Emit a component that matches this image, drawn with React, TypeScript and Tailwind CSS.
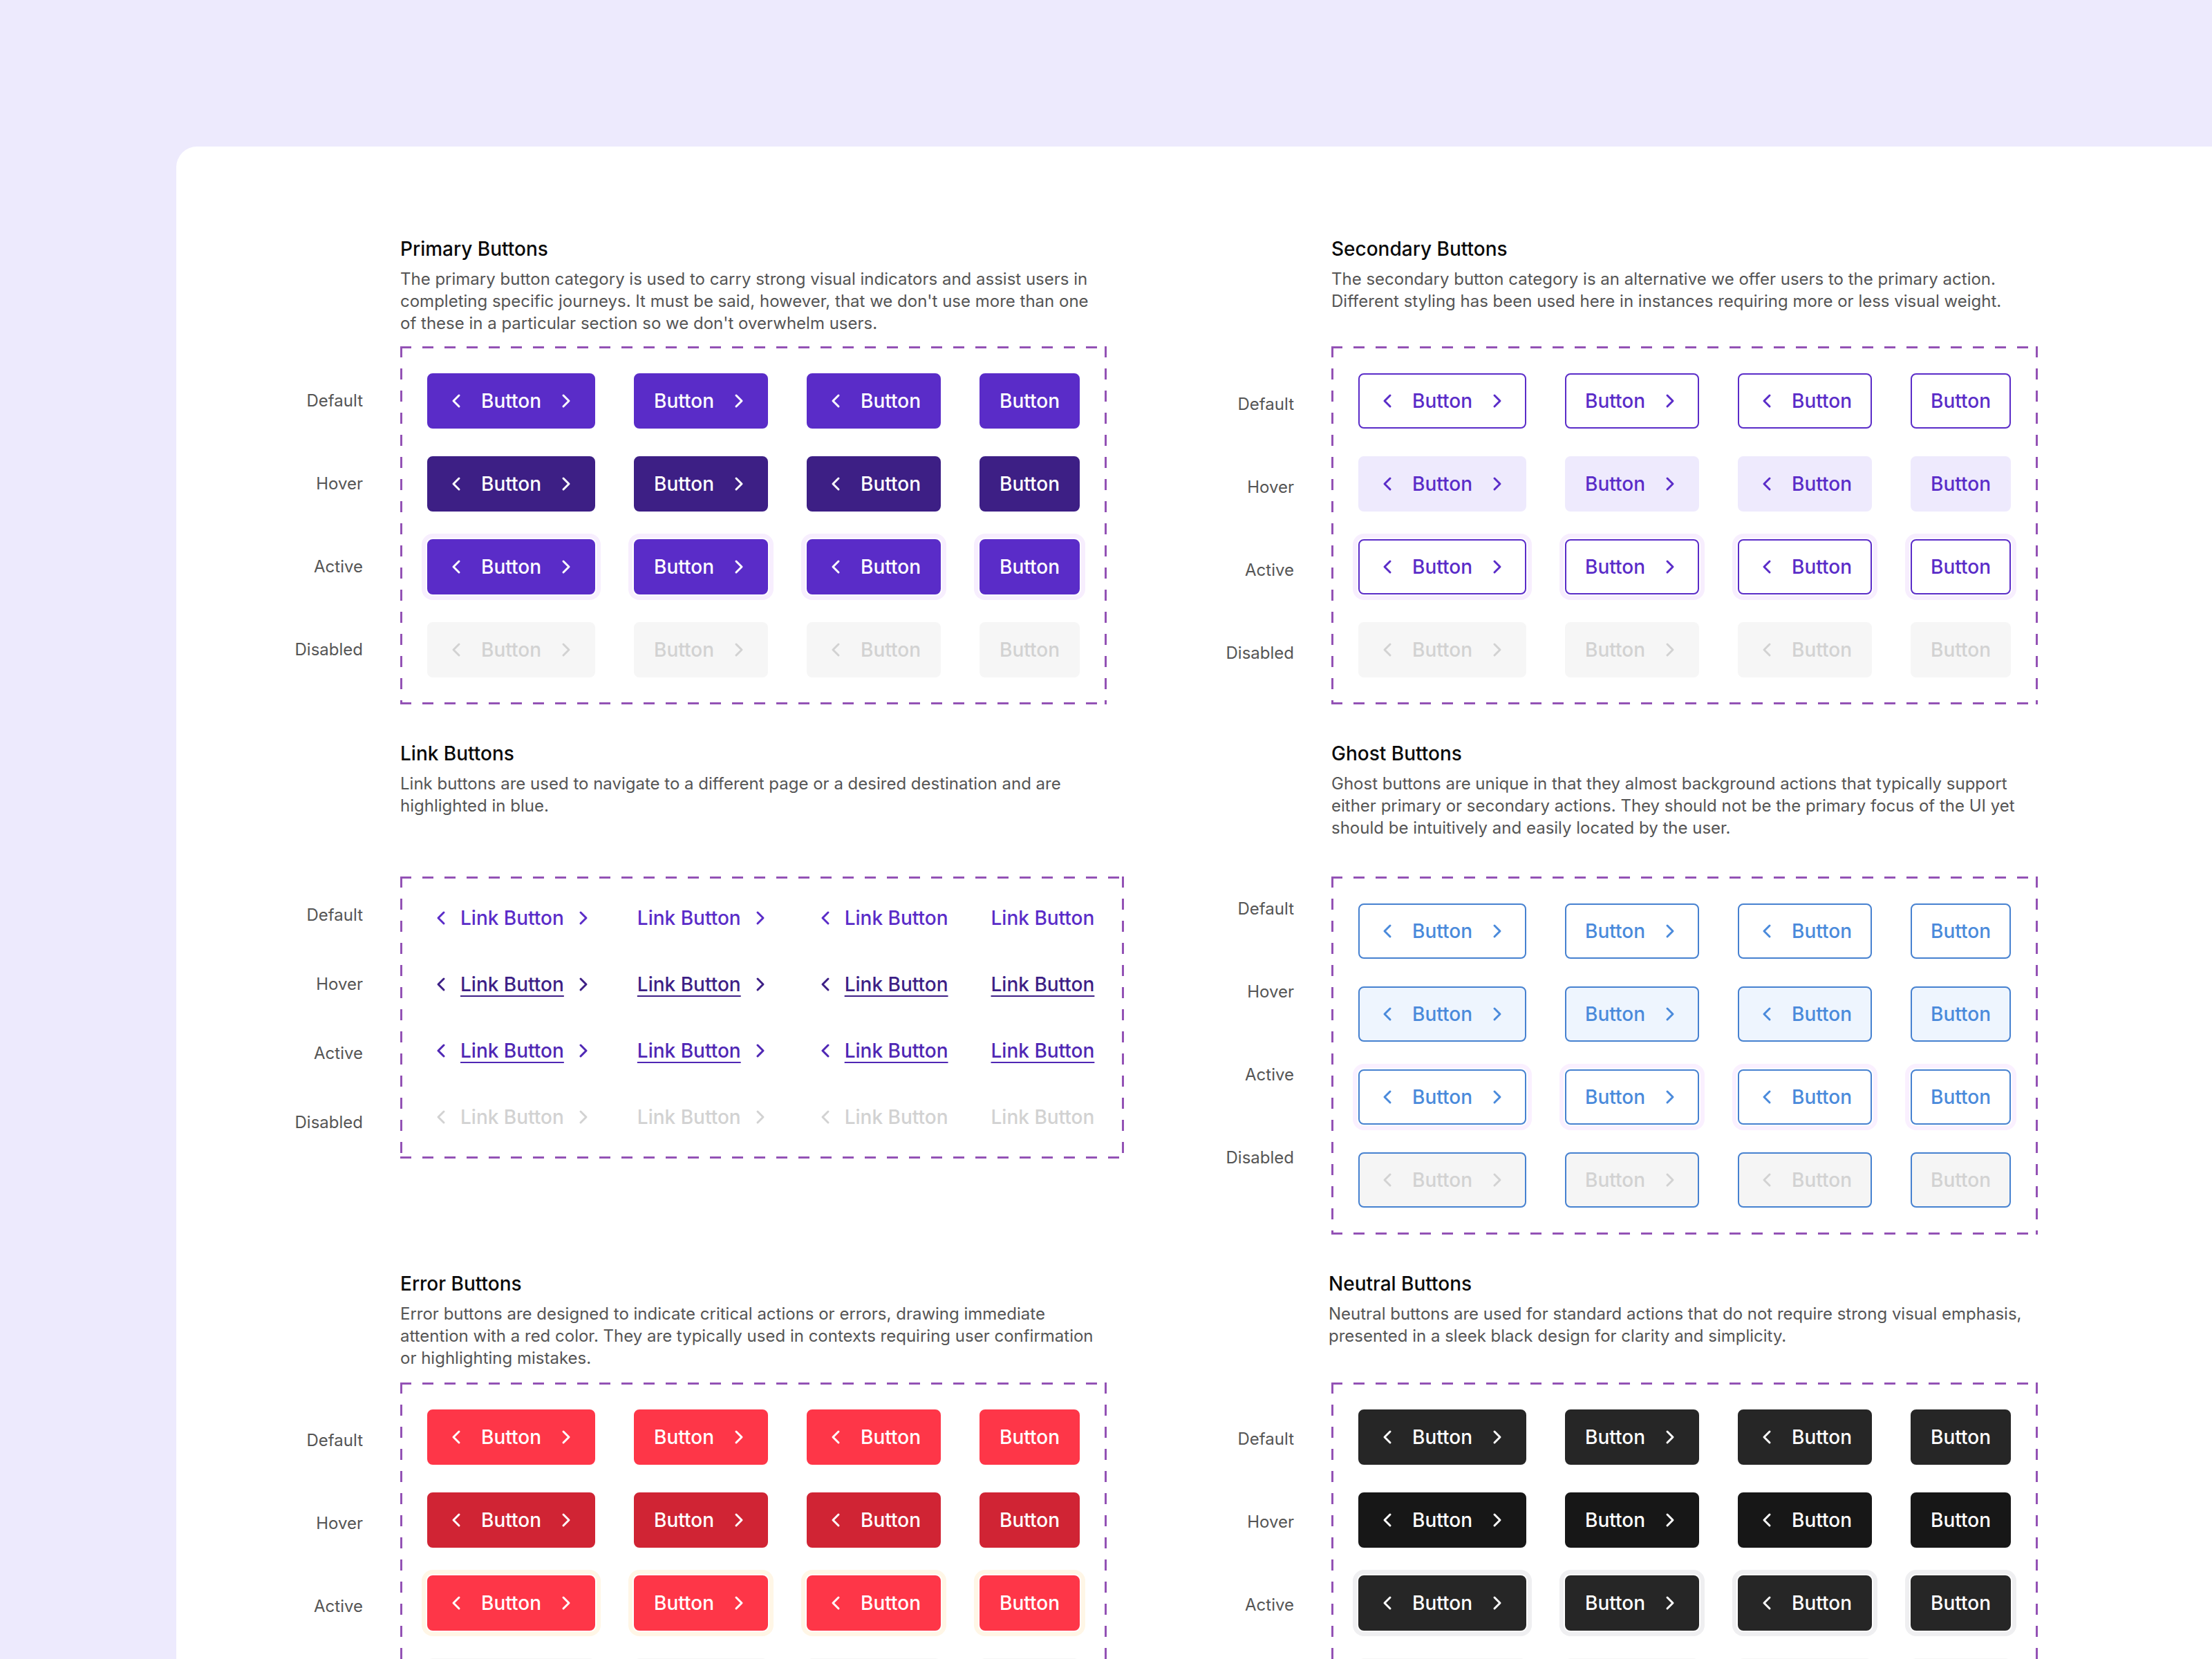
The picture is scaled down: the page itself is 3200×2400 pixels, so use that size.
import { ChevronLeft, ChevronRight } from "lucide-react";
import clsx from "clsx";

type Variant = "primary" | "secondary" | "ghost" | "error" | "neutral";
type State = "default" | "hover" | "active" | "disabled";

const STATES: State[] = ["default", "hover", "active", "disabled"];
const LABELS: Record<State, string> = {
    default: "Default",
    hover: "Hover",
    active: "Active",
    disabled: "Disabled",
};

// which chevrons each of the four columns shows
const COLS = [
    { left: true, right: true },
    { left: false, right: true },
    { left: true, right: false },
    { left: false, right: false },
];

const BUTTON_STYLES: Record<Variant, Record<State, string>> = {
    primary: {
        default: "bg-[#5A2CC8] border-[#5A2CC8] text-white",
        hover: "bg-[#3D1F85] border-[#3D1F85] text-white",
        active: "bg-[#5A2CC8] border-[#5A2CC8] text-white shadow-[0_0_0_2px_#ffffff,0_0_0_8px_#F7EEFE]",
        disabled: "bg-[#F6F6F6] border-[#F6F6F6] text-[#D2D2D2]",
    },
    secondary: {
        default: "bg-white border-[#5A2CC8] text-[#5A2CC8]",
        hover: "bg-[#EEEAFD] border-[#EEEAFD] text-[#5A2CC8]",
        active: "bg-white border-[#5A2CC8] text-[#5A2CC8] shadow-[0_0_0_2px_#ffffff,0_0_0_8px_#F7EEFE]",
        disabled: "bg-[#F6F6F6] border-[#F6F6F6] text-[#D2D2D2]",
    },
    ghost: {
        default: "bg-white border-[#4681D0] text-[#4A8ADB]",
        hover: "bg-[#EEF5FE] border-[#4681D0] text-[#4A8ADB]",
        active: "bg-white border-[#4681D0] text-[#4A8ADB] shadow-[0_0_0_2px_#ffffff,0_0_0_8px_#FAF0FF]",
        disabled: "bg-[#F5F5F5] border-[#4681D0] text-[#D2D2D2]",
    },
    error: {
        default: "bg-[#FE3648] border-[#FE3648] text-white",
        hover: "bg-[#D02434] border-[#D02434] text-white",
        active: "bg-[#FE3648] border-[#FE3648] text-white shadow-[0_0_0_2px_#ffffff,0_0_0_8px_#FFF6E6]",
        disabled: "bg-[#F6F6F6] border-[#F6F6F6] text-[#D2D2D2]",
    },
    neutral: {
        default: "bg-[#262626] border-[#262626] text-white",
        hover: "bg-[#171717] border-[#171717] text-white",
        active: "bg-[#262626] border-[#262626] text-white shadow-[0_0_0_2px_#ffffff,0_0_0_8px_#EFEFF1]",
        disabled: "bg-[#F6F6F6] border-[#F6F6F6] text-[#D2D2D2]",
    },
};

const LINK_STYLES: Record<State, { wrap: string; text: string }> = {
    default: { wrap: "text-[#5A2CC8]", text: "" },
    hover: { wrap: "text-[#3D1F85]", text: "underline decoration-2 underline-offset-[6px]" },
    active: { wrap: "text-[#4F27B4]", text: "underline decoration-2 underline-offset-[6px]" },
    disabled: { wrap: "text-[#D2D2D2]", text: "" },
};

// purple dashed frame, drawn with gradients so the dashes are 16px long
const DASHED =
    "bg-no-repeat [background-image:repeating-linear-gradient(90deg,#9352B5_0_16px,transparent_16px_32px),repeating-linear-gradient(90deg,#9352B5_0_16px,transparent_16px_32px),repeating-linear-gradient(180deg,#9352B5_0_16px,transparent_16px_32px),repeating-linear-gradient(180deg,#9352B5_0_16px,transparent_16px_32px)] [background-size:100%_3px,100%_3px,3px_100%,3px_100%] [background-position:0_0,0_100%,0_0,100%_0]";

function Btn({ cls, left, right }: { cls: string; left: boolean; right: boolean }) {
    return (
        <div
            className={clsx(
                "flex h-[80px] items-center gap-[20px] rounded-[8px] border-2 text-[28px] font-medium",
                left ? "pl-[24px]" : "pl-[27px]",
                right ? "pr-[24px]" : "pr-[27px]",
                cls
            )}
        >
            {left && <ChevronLeft size={32} strokeWidth={2.25} />}
            <span>Button</span>
            {right && <ChevronRight size={32} strokeWidth={2.25} />}
        </div>
    );
}

function LinkBtn({ state, left, right }: { state: State; left: boolean; right: boolean }) {
    const s = LINK_STYLES[state];
    return (
        <div className={clsx("flex h-[42px] items-center gap-[12px] px-[4px] text-[28px] font-medium", s.wrap)}>
            {left && <ChevronLeft size={32} strokeWidth={2.25} />}
            <span className={s.text}>Link Button</span>
            {right && <ChevronRight size={32} strokeWidth={2.25} />}
        </div>
    );
}

interface SectionProps {
    title: string;
    lines: string[];
    headerCls: string;
    labelCls: string;
    kind: Variant | "link";
}

function Section({ title, lines, headerCls, labelCls, kind }: SectionProps) {
    const isLink = kind === "link";
    return (
        <div className="flex items-start">
            {/* state labels, outside the frame */}
            <div className={clsx("mr-[54px] flex w-[110px] flex-col", isLink ? "gap-[58px]" : "gap-[40px]", labelCls)}>
                {STATES.map((st) => (
                    <div
                        key={st}
                        className={clsx(
                            "flex items-center justify-end text-[24px] text-[#555555]",
                            isLink ? "h-[42px]" : "h-[80px]"
                        )}
                    >
                        {LABELS[st]}
                    </div>
                ))}
            </div>

            <div className="flex flex-col">
                <div className={headerCls}>
                    <h2 className="text-[28px] font-medium leading-[36px] text-[#0A0A0A]">{title}</h2>
                    <p className="mt-[10px] whitespace-nowrap text-[24px] leading-[32px] text-[#555555]">
                        {lines.map((l, i) => (
                            <span key={i}>
                                {l}
                                {i < lines.length - 1 && <br />}
                            </span>
                        ))}
                    </p>
                </div>

                <div className={clsx("w-fit p-[39px]", DASHED)}>
                    <div className={clsx("flex flex-col", isLink ? "gap-[54px]" : "gap-[40px]")}>
                        {STATES.map((st) => (
                            <div key={st} className={clsx("flex", isLink ? "gap-[54px]" : "gap-[56px]")}>
                                {COLS.map((c, i) =>
                                    isLink ? (
                                        <LinkBtn key={i} state={st} left={c.left} right={c.right} />
                                    ) : (
                                        <Btn key={i} cls={BUTTON_STYLES[kind as Variant][st]} left={c.left} right={c.right} />
                                    )
                                )}
                            </div>
                        ))}
                    </div>
                </div>
            </div>
        </div>
    );
}

export default function App() {
    return (
        <div className="h-[2400px] w-full overflow-hidden bg-[#EDEAFD] font-['Inter','Noto_Sans',sans-serif]">
            <div className="ml-[255px] mt-[212px] rounded-tl-[30px] bg-white pb-[200px] pl-[160px] pt-[130px]">
                <div className="grid grid-cols-[1347px_auto] gap-y-[53px]">
                    {/* Row 1 */}
                    <Section
                        kind="primary"
                        title="Primary Buttons"
                        lines={[
                            "The primary button category is used to carry strong visual indicators and assist users in",
                            "completing specific journeys. It must be said, however, that we don't use more than one",
                            "of these in a particular section so we don't overwhelm users.",
                        ]}
                        headerCls="h-[159px]"
                        labelCls="pt-[198px]"
                    />
                    <Section
                        kind="secondary"
                        title="Secondary Buttons"
                        lines={[
                            "The secondary button category is an alternative we offer users to the primary action.",
                            "Different styling has been used here in instances requiring more or less visual weight.",
                        ]}
                        headerCls="h-[159px]"
                        labelCls="pt-[203px]"
                    />

                    {/* Row 2 */}
                    <Section
                        kind="link"
                        title="Link Buttons"
                        lines={[
                            "Link buttons are used to navigate to a different page or a desired destination and are",
                            "highlighted in blue.",
                        ]}
                        headerCls="h-[196px]"
                        labelCls="pt-[231px]"
                    />
                    <Section
                        kind="ghost"
                        title="Ghost Buttons"
                        lines={[
                            "Ghost buttons are unique in that they almost background actions that typically support",
                            "either primary or secondary actions. They should not be the primary focus of the UI yet",
                            "should be intuitively and easily located by the user.",
                        ]}
                        headerCls="h-[196px]"
                        labelCls="pt-[203px]"
                    />

                    {/* Row 3 */}
                    <Section
                        kind="error"
                        title="Error Buttons"
                        lines={[
                            "Error buttons are designed to indicate critical actions or errors, drawing immediate",
                            "attention with a red color. They are typically used in contexts requiring user confirmation",
                            "or highlighting mistakes.",
                        ]}
                        headerCls="h-[161px]"
                        labelCls="pt-[205px]"
                    />
                    <Section
                        kind="neutral"
                        title="Neutral Buttons"
                        lines={[
                            "Neutral buttons are used for standard actions that do not require strong visual emphasis,",
                            "presented in a sleek black design for clarity and simplicity.",
                        ]}
                        headerCls="h-[161px] -ml-[4px]"
                        labelCls="pt-[203px]"
                    />
                </div>
            </div>
        </div>
    );
}
